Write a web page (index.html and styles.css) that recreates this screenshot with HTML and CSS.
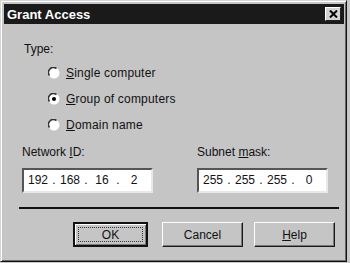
FILE: index.html
```html
<!DOCTYPE html>
<html lang="en">

<head>
    <meta charset="UTF-8">
    <meta name="viewport" content="width=device-width, initial-scale=1.0">
    <title>Grant Access</title>

    <link rel="stylesheet" href="styles.css">
</head>

<body>

    <div class="window">
        <!-- Title Bar -->
        <div class="titlebar">
            <span class="title">Grant Access</span>
            <button class="close-btn" aria-label="Close">
                <svg width="9" height="8" viewBox="0 0 9 8">
                    <path d="M1 0.5 L8 7.5 M8 0.5 L1 7.5" stroke="#000" stroke-width="2" fill="none" />
                </svg>
            </button>
        </div>

        <div class="content">
            <!-- Access Type -->
            <div class="type-label">Type:</div>

            <div class="radio-group">
                <label class="radio">
                    <svg class="radio-mark" width="12" height="12" viewBox="0 0 12 12">
                        <circle cx="6" cy="6" r="5.5" fill="#fff" />
                        <path d="M1.5 8.5 A5 5 0 0 1 8.5 1.5" stroke="#333" stroke-width="1.6" fill="none" />
                    </svg>
                    <span><u>S</u>ingle computer</span>
                </label>
                <label class="radio">
                    <svg class="radio-mark" width="12" height="12" viewBox="0 0 12 12">
                        <circle cx="6" cy="6" r="5.5" fill="#fff" />
                        <path d="M1.5 8.5 A5 5 0 0 1 8.5 1.5" stroke="#333" stroke-width="1.6" fill="none" />
                        <circle cx="6" cy="6" r="2" fill="#000" />
                    </svg>
                    <span><u>G</u>roup of computers</span>
                </label>
                <label class="radio">
                    <svg class="radio-mark" width="12" height="12" viewBox="0 0 12 12">
                        <circle cx="6" cy="6" r="5.5" fill="#fff" />
                        <path d="M1.5 8.5 A5 5 0 0 1 8.5 1.5" stroke="#333" stroke-width="1.6" fill="none" />
                    </svg>
                    <span><u>D</u>omain name</span>
                </label>
            </div>

            <!-- Address Fields -->
            <div class="fields">
                <div class="field">
                    <div class="field-label">Network <u>I</u>D:</div>
                    <div class="ip-box">
                        <span class="octet">192</span><span class="dot">.</span><span class="octet">168</span><span class="dot">.</span><span class="octet">16</span><span class="dot">.</span><span class="octet">2</span>
                    </div>
                </div>
                <div class="field">
                    <div class="field-label">Subnet <u>m</u>ask:</div>
                    <div class="ip-box">
                        <span class="octet">255</span><span class="dot">.</span><span class="octet">255</span><span class="dot">.</span><span class="octet">255</span><span class="dot">.</span><span class="octet">0</span>
                    </div>
                </div>
            </div>

            <div class="separator"></div>

            <!-- Dialog Buttons -->
            <div class="buttons">
                <button class="btn btn-default"><span>OK</span></button>
                <button class="btn btn-cancel"><span>Cancel</span></button>
                <button class="btn btn-help"><span><u>H</u>elp</span></button>
            </div>
        </div>
    </div>

</body>

</html>
```

FILE: styles.css
```css
/* General Styling */
body {
    font-family: 'Liberation Sans', Arial, sans-serif;
    font-size: 12px;
    background-color: #c8c8c8;
    margin: 0;
    padding: 0;
    color: #111;
}

/* Dialog Window */
.window {
    width: 347px;
    height: 262px;
    box-sizing: border-box;
    background-color: #c5c5c5;
    border: 1px solid;
    border-color: #d6d6d6 #111111 #111111 #d6d6d6;
    box-shadow: inset 1px 1px #ffffff, inset -1px -1px #6a6a6a;
    padding: 3px 2px 2px 3px;
}

/* Title Bar */
.titlebar {
    height: 20px;
    background-color: #1a1a1a;
    display: flex;
    align-items: center;
    justify-content: space-between;
    padding: 0 3px;
}

.title {
    color: #ffffff;
    font-weight: bold;
    font-size: 13px;
}

.close-btn {
    width: 16px;
    height: 14px;
    padding: 0;
    background-color: #d2d2d2;
    border: 1px solid;
    border-color: #ffffff #222222 #222222 #ffffff;
    display: flex;
    align-items: center;
    justify-content: center;
}

/* Content */
.content {
    padding: 0 8px 0 11px;
}

.type-label {
    line-height: 14px;
    margin: 18px 0 0 9px;
}

.radio-group {
    margin-top: 4px;
}

.radio {
    display: flex;
    align-items: center;
    height: 26px;
    padding-left: 33px;
    letter-spacing: 0.2px;
}

.radio-mark {
    margin-right: 6px;
}

/* Address Fields */
.fields {
    display: flex;
    gap: 44px;
    margin: 7px 0 0 7px;
}

.field-label {
    line-height: 14px;
}

.ip-box {
    width: 131px;
    height: 25px;
    box-sizing: border-box;
    margin-top: 9px;
    background-color: #ffffff;
    border: 2px solid;
    border-color: #555555 #e8e8e8 #e8e8e8 #555555;
    padding-left: 2px;
    display: flex;
    align-items: center;
    line-height: 21px;
}

.octet {
    width: 24px;
    text-align: center;
}

.dot {
    width: 8px;
    text-align: center;
}

.separator {
    margin: 14px 0 0 4px;
    border-top: 2px solid #111111;
    width: 320px;
}

/* Buttons */
.buttons {
    display: flex;
    margin: 13px 0 0 58px;
}

.btn {
    height: 25px;
    width: 81px;
    padding: 0;
    font-family: inherit;
    font-size: 12px;
    color: #111;
    background-color: #c5c5c5;
    border: 1px solid;
    border-color: #ffffff #1a1a1a #1a1a1a #ffffff;
    box-shadow: inset -1px -1px #777777;
}

.btn-default {
    width: 75px;
    border: 2px solid #111111;
    box-shadow: inset 1px 1px #ffffff, inset -1px -1px #777777;
    padding: 3px;
}

.btn-default span {
    display: block;
    height: 100%;
    box-sizing: border-box;
    border: 1px dotted #333333;
    line-height: 15px;
}

.btn-cancel {
    margin-left: 14px;
}

.btn-help {
    margin-left: 11px;
}
```
